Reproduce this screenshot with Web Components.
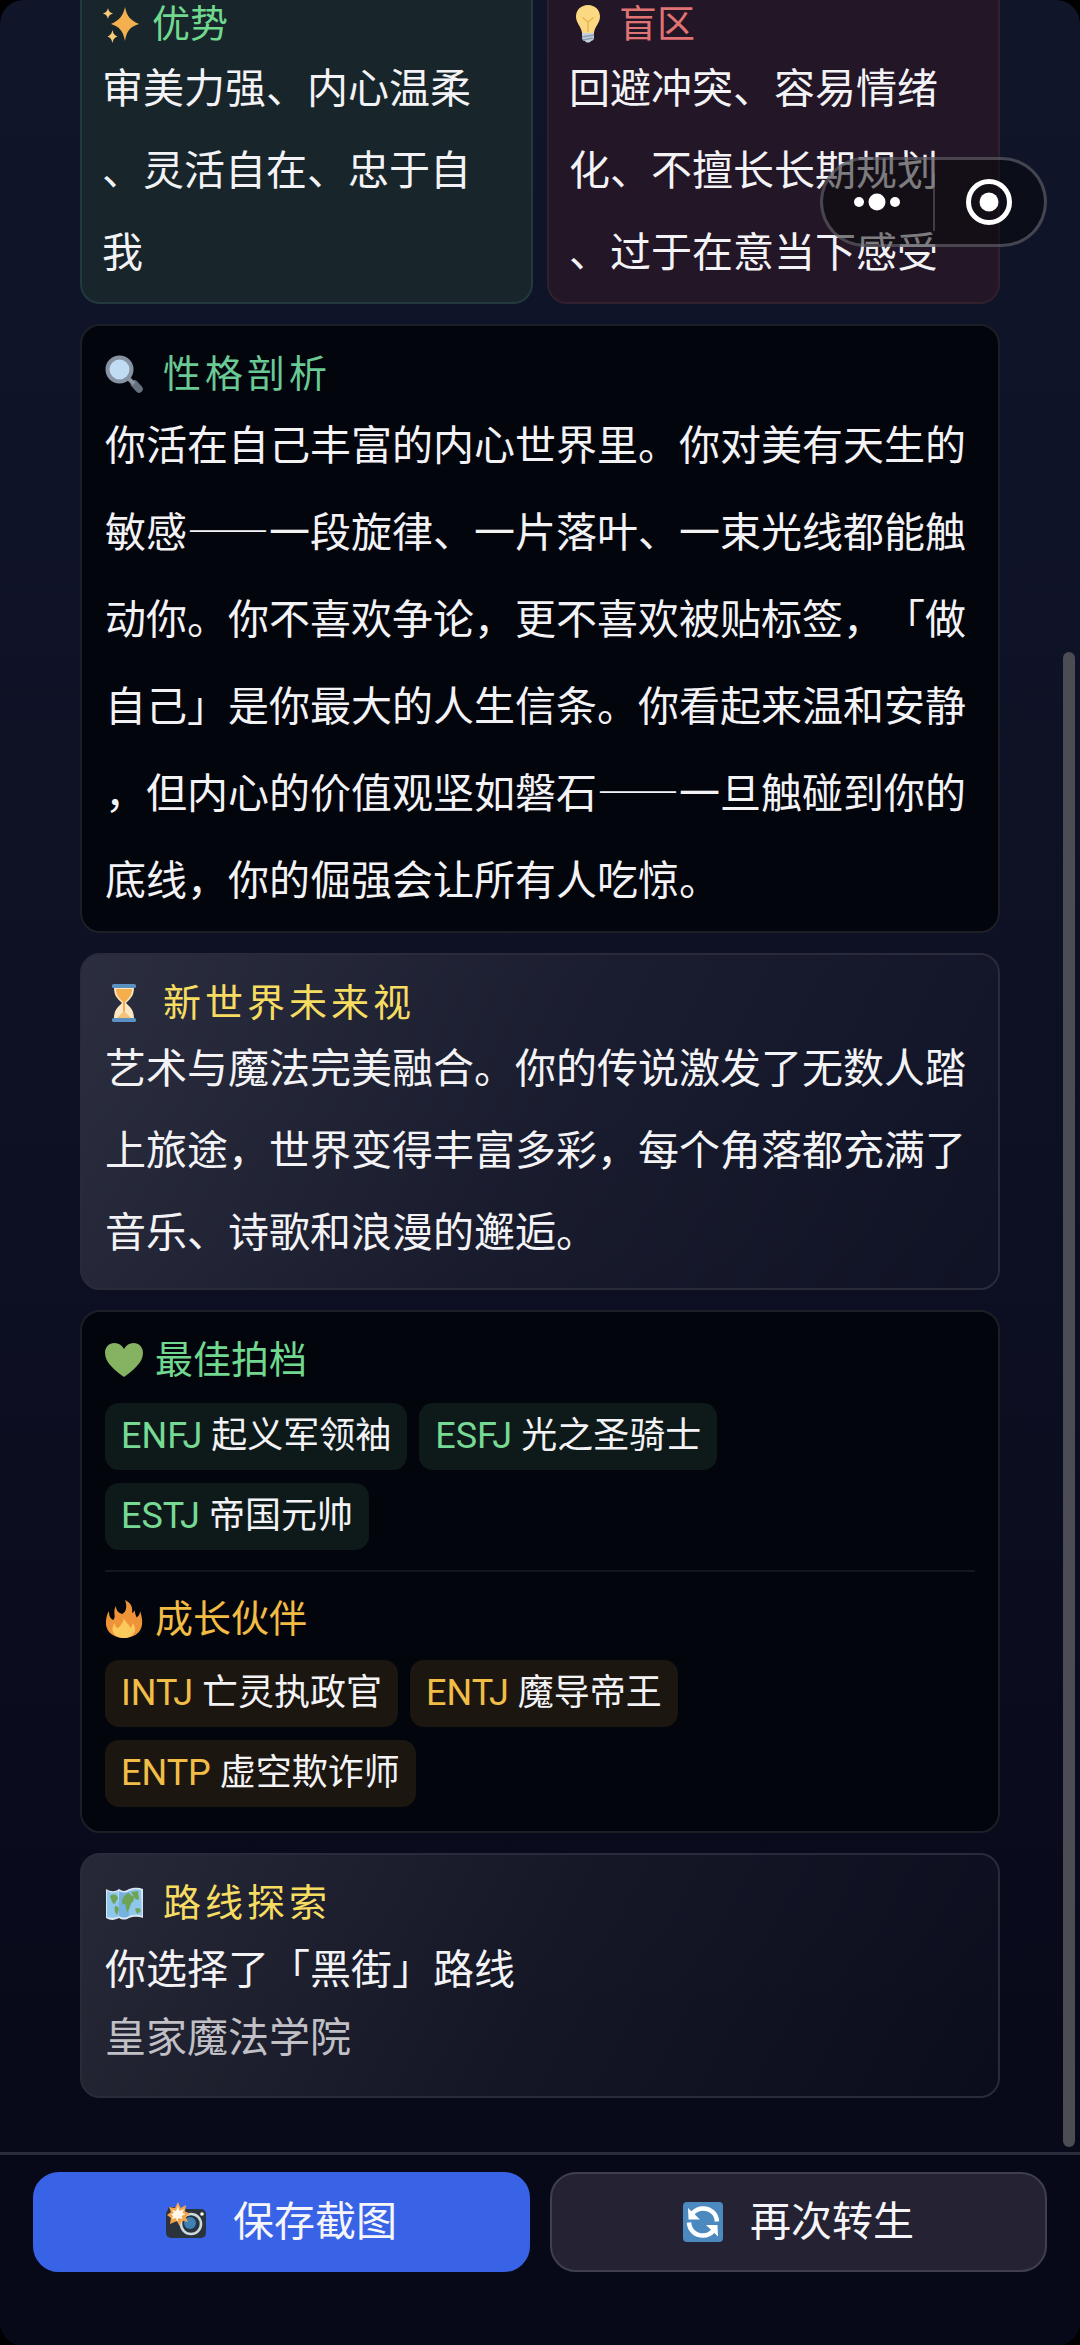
<!DOCTYPE html>
<html lang="zh-CN">
<head>
<meta charset="utf-8">
<meta name="viewport" content="width=device-width, initial-scale=1">
<title>转生结果</title>
<style>
  html { background: #000; }
  body {
    margin: 0;
    font-family: Roboto, "Noto Sans CJK SC", sans-serif;
    color: #f3f3f6;
    text-spacing-trim: space-all;
  }
</style>
</head>
<body>
<result-app>
  <card-row>
    <info-card tone="green" cut>
      <card-title slot="title" icon="sparkles" tone="mint" short>优势</card-title>
      <body-text>审美力强、内心温柔、灵活自在、忠于自我</body-text>
    </info-card>
    <info-card tone="red" cut>
      <card-title slot="title" icon="bulb" tone="coral" short>盲区</card-title>
      <body-text>回避冲突、容易情绪化、不擅长长期规划、过于在意当下感受</body-text>
    </info-card>
  </card-row>
  <info-card tone="dark">
    <card-title slot="title" icon="search" tone="jade" wide>性格剖析</card-title>
    <body-text spacing="loose">你活在自己丰富的内心世界里。你对美有天生的敏感——一段旋律、一片落叶、一束光线都能触动你。你不喜欢争论，更不喜欢被贴标签，「做自己」是你最大的人生信条。你看起来温和安静，但内心的价值观坚如磐石——一旦触碰到你的底线，你的倔强会让所有人吃惊。</body-text>
  </info-card>
  <info-card tone="glass">
    <card-title slot="title" icon="hourglass" tone="yellow" wide>新世界未来视</card-title>
    <body-text>艺术与魔法完美融合。你的传说激发了无数人踏上旅途，世界变得丰富多彩，每个角落都充满了音乐、诗歌和浪漫的邂逅。</body-text>
  </info-card>
  <info-card tone="dark" roomy>
    <partner-group>
      <card-title slot="title" icon="heart" tone="mint">最佳拍档</card-title>
      <type-chip code="ENFJ">起义军领袖</type-chip>
      <type-chip code="ESFJ">光之圣骑士</type-chip>
      <type-chip code="ESTJ">帝国元帅</type-chip>
    </partner-group>
    <partner-group tone="amber" divided>
      <card-title slot="title" icon="fire" tone="amber">成长伙伴</card-title>
      <type-chip code="INTJ" tone="amber">亡灵执政官</type-chip>
      <type-chip code="ENTJ" tone="amber">魔导帝王</type-chip>
      <type-chip code="ENTP" tone="amber">虚空欺诈师</type-chip>
    </partner-group>
  </info-card>
  <info-card tone="glass" roomy>
    <card-title slot="title" icon="map" tone="yellow" wide>路线探索</card-title>
    <body-text spacing="tight">你选择了「黑街」路线</body-text>
    <body-text spacing="tight" muted>皇家魔法学院</body-text>
  </info-card>
  <action-button slot="actions" icon="camera" primary>保存截图</action-button>
  <action-button slot="actions" icon="refresh">再次转生</action-button>
</result-app>

<script>
const ICONS = {
  sparkles: `<path fill="#f4b04f" d="M23 9c1.800 8.500 4.500 13 14 17-9.500 3-12.200 7-14 17-2-10-5-14-14-17 9-4 12-8.500 14-17Z" transform="translate(0 -7)"/><path fill="#f7cb78" d="M6 3c.8 3.500 2 4.500 5 5.500-3 1-4.200 2-5 5.500-1-3.500-2-4.500-5-5.500 3-1 4-2 5-5.500ZM10.500 25c.8 4 2 5 5 6.500-3 1.300-4.200 2.500-5 6.500-1-4-2-5.200-5-6.500 3-1.500 4-2.500 5-6.500Z"/>`,
  bulb: `<path fill="#c3cfdc" d="M13 27h12v6c0 2-2 3-3 3-1 2-5 2-6 0-1 0-3-1-3-3Z"/><path stroke="#8b9cb0" stroke-width="1.500" d="m13 32 12-2M14 35l10-2"/><path fill="#fbd982" d="M19 0c7 0 12 5 12 11.500 0 7-5.500 10-6 16.500H13C12.500 21.500 7 18.500 7 11.500 7 5 12 0 19 0Z"/><path fill="none" stroke="#e9b653" stroke-width="1.600" d="M13.500 12.500 19 17l5.500-4.500M19 17v10"/>`,
  search: `<path stroke="#66717d" stroke-width="7.500" stroke-linecap="round" d="m29.500 29 4.500 5"/><path stroke="#8a95a3" stroke-width="4" d="m22 22 7 7"/><circle cx="14.500" cy="14.500" r="12" fill="#bfdcf3" stroke="#8793a3" stroke-width="4"/>`,
  hourglass: `<path fill="#fde7c4" d="M9 3h20c0 9-3 11-8 16 5 5 8 7 8 16H9c0-9 3-11 8-16C12 14 9 12 9 3Z"/><path fill="#f6ad4b" d="M11 5h16c0 6-3 9-7 13v15h-2V18c-4-4-7-7-7-13Z"/><path fill="#f5c27a" d="m12 34 7-7 7 7Z"/><rect x="7" y="0" width="24" height="4" rx="1.500" fill="#5a90c2"/><rect x="7" y="34" width="24" height="4" rx="1.500" fill="#5a90c2"/>`,
  heart: `<path fill="#86b361" d="M19 36C11 30 0 22 0 12 0 6 4 2 9.500 2c4 0 7.500 2 9.500 6 2-4 5.500-6 9.500-6C34 2 38 6 38 12c0 10-11 18-19 24Z"/>`,
  fire: `<path fill="#ef9339" d="M20 0c6 3 8 7 7 13 2-.8 3-2 3-5 0-1 0 0 0 0-.5 6 1 7 1.500 9.500C34 16 35 14 35 11c2 5 2.500 10 2 14-1 8-9 13-18 13S2 33 1 25C.5 19 2 14 4 11c0 5 1 7 4 9 4-3-1-8 3-14 0 5 3 7 6 8C22 12 22 5 20 0Z"/><path fill="#fcc95d" d="M19 18c1 5 6 6 6 10 2-1 2.500-3 2.500-5 5 5 3 15-8.500 15S5 29 10 23c0 3 1 5 3 5 3-3 5-5 6-10Z"/>`,
  map: `<path fill="#dbe7f3" d="M1 5c5 3 9 3 13 0 4 3 7 2 10 0 4-1 9-2 14 0v29c-5-2-10-1-14 0-3 2-7 2-10 0-4 2-8 3-13 0Z"/><path fill="#8ec6ec" d="M2 7c5 2 8 2 11 0l2 25c-4 2-8 2-13 1Z"/><path fill="#76b2df" d="M14 7c4 2 7 2 10 0v25c-3 2-6 2-10 0Z"/><path fill="#8ec6ec" d="M24 7c4-2 8-2 12-1l1 26c-5-2-9-1-13 0Z"/><path fill="#6fa356" d="M5 12c4-3 8-1 8 3-2 1-2 4-4 5-2-1-3-5-4-8Zm5 10c4 0 5 3 2 9-2-2-3-5-2-9Zm7-4c0-4 3-8 7-9 2 1 2 3 4 3 3 3-1 6-2 8s-2 7-4 8c-1-3-1-7-2-8-2 1-3 0-3-2Zm9-10 7-1 1 8c-2 2-4 0-5-2Zm4 17c3-2 5-1 6 2l-4 3Z"/>`,
  camera: `<rect x="0" y="7" width="40" height="29" rx="5" fill="#2b343d"/><rect x="2" y="5" width="10" height="5" rx="2" fill="#2b343d"/><circle cx="25" cy="22" r="10" fill="#26343f" stroke="#ced8df" stroke-width="2.600"/><circle cx="24" cy="21" r="6" fill="#3f80b5"/><circle cx="36" cy="12" r="1.800" fill="#fff"/><path fill="#f3a54c" d="m12 0 2.500 6L20 3l-1 6.500 5 2-4.500 3L22 20l-6-1.500-2.500 5.500-2.500-5L4 22l1-6-4-3 4-3-2-5 6 1Z"/><path fill="#fff7e9" d="m12 4 1.500 5L18 7l-1.500 4 3 1-4 2 1 3-4-1-1.500 4-1-4-4 1 1-3-2-2 3-1-2-3 4 1Z"/>`,
  refresh: `<rect width="40" height="40" rx="4" fill="#4b89bf"/><path fill="none" stroke="#fff" stroke-width="4.500" d="M6 20.500C6.500 28 12 33.500 20 33.500c4.500 0 8-2 10.500-5M34 19.500C33.500 12 28 6.500 20 6.500c-4.500 0-8 2-10.500 5"/><path fill="#fff" d="m5 6 .5 11.500H17L5 6Zm30 28.500-.5-11.500H23l12 11.500Z"/>`
};
const icon = (name, size) =>
  `<svg viewBox="0 0 ${size} ${size}" width="${size}" height="${size}" aria-hidden="true">${ICONS[name] || ''}</svg>`;

const define = (tag, render) => customElements.define(tag, class extends HTMLElement {
  connectedCallback() {
    if (this.shadowRoot) return;
    this.attachShadow({ mode: 'open' }).innerHTML = render(this);
  }
});

define('card-row', () => `
  <style>
    :host { display: grid; grid-template-columns: 1fr 1fr; gap: 14px; }
  </style><slot></slot>`);

define('info-card', () => `
  <style>
    :host {
      display: block; box-sizing: border-box; border: 2px solid #1d1f26; border-radius: 20px;
      padding: 23px 23px 10px; background: #03050d;
    }
    :host([tone="glass"]) {
      border-color: #292b3b; padding-bottom: 14px;
      background: linear-gradient(115deg, rgba(255,255,255,.12), rgba(255,255,255,.05) 50%, rgba(255,255,255,.01));
    }
    :host([roomy]) { padding-bottom: 24px; }
    :host([cut]) {
      border-top: 0; border-radius: 0 0 20px 20px; padding: 0 20px 8px;
    }
    :host([tone="green"]) { background: #18262b; border-color: #223a3d; }
    :host([tone="red"]) { background: #231626; border-color: #33202e; }
  </style><slot name="title"></slot><slot></slot>`);

define('card-title', el => `
  <style>
    :host { display: block; }
    h2 {
      display: flex; align-items: center; gap: 12px; margin: 0;
      font-size: 38px; font-weight: 400; line-height: 50px; color: var(--tone);
    }
    :host { --tone: #71d88f; }
    :host([tone="coral"]) { --tone: #e07374; }
    :host([tone="jade"]) { --tone: #69ca96; }
    :host([tone="yellow"]) { --tone: #f6dd62; }
    :host([tone="amber"]) { --tone: #f2bb43; }
    :host([wide]) h2 { gap: 20px; letter-spacing: 4px; }
    :host([short]) h2 { line-height: 48px; }
    svg { flex: none; }
  </style><h2>${icon(el.getAttribute('icon'), 38)}<span><slot></slot></span></h2>`);

define('body-text', () => `
  <style>
    :host { display: block; }
    p { margin: 0; font-size: 41px; line-height: 82px; line-break: anywhere; }
    :host([spacing="loose"]) p { line-height: 87px; font-family: "Noto Sans CJK SC", sans-serif; }
    :host([spacing="tight"]) p { line-height: 68px; }
    :host([spacing="tight"]:not([muted])) p { margin-top: 8px; }
    :host([muted]) p { color: #c0c0c6; }
  </style><p><slot></slot></p>`);

define('partner-group', () => `
  <style>
    :host { display: block; }
    :host([divided]) { margin-top: 20px; padding-top: 22px; border-top: 2px solid #14151d; }
    .chips { display: flex; flex-wrap: wrap; gap: 13px 12px; margin-top: 18px; }
    :host([divided]) .chips { margin-top: 16px; }
  </style><slot name="title"></slot><div class="chips"><slot></slot></div>`);

define('type-chip', el => `
  <style>
    :host {
      display: block; padding: 0 16px; border-radius: 14px;
      font-size: 36px; line-height: 67px; white-space: nowrap; background: #0e1a1a;
    }
    b { font-weight: 400; color: #76d994; }
    :host([tone="amber"]) { background: #1c1611; }
    :host([tone="amber"]) b { color: #f1bd47; }
  </style><b>${el.getAttribute('code')}</b> <slot></slot>`);

define('action-button', el => `
  <style>
    :host { display: flex; flex: 1; }
    button {
      flex: 1; display: flex; align-items: center; justify-content: center; gap: 27px;
      height: 100px; padding: 0; border: 2px solid #3f3f4e; border-radius: 26px;
      background: #252333; color: #f6f6fa; font: inherit; font-size: 41px; line-height: 60px; cursor: pointer;
    }
    :host([primary]) button { background: #3963e6; border-color: #3963e6; }
  </style><button type="button">${icon(el.getAttribute('icon'), 40)}<span><slot></slot></span></button>`);

define('capsule-menu', () => `
  <style>
    :host {
      position: absolute; top: 157px; right: 33px; width: 227px; height: 90px; box-sizing: border-box;
      display: flex; align-items: center; border: 3px solid rgba(125,125,135,.5); border-radius: 45px;
      background: rgba(6,6,8,.5);
    }
    button { flex: 1; height: 58px; padding: 0; border: 0; background: none; display: flex; align-items: center; justify-content: center; }
    button + button { border-left: 2px solid rgba(150,150,160,.35); }
  </style>
  <button type="button" aria-label="更多"><svg width="48" height="20" viewBox="0 0 48 20" fill="#fff"><circle cx="5" cy="10" r="5"/><circle cx="23" cy="10" r="8.500"/><circle cx="41" cy="10" r="5"/></svg></button>
  <button type="button" aria-label="关闭"><svg width="48" height="48" viewBox="0 0 48 48"><circle cx="24" cy="24" r="20.500" fill="none" stroke="#fff" stroke-width="5"/><circle cx="24" cy="24" r="9.500" fill="#fff"/></svg></button>`);

define('scroll-thumb', () => `
  <style>
    :host { position: absolute; right: 5px; top: 652px; bottom: 5px; width: 12px; border-radius: 6px; background: #4b4c54; }
  </style>`);

define('result-app', () => `
  <style>
    :host {
      display: flex; flex-direction: column; min-height: 100vh; overflow: hidden; border-radius: 24px;
      background: linear-gradient(#10152a, #0e1124 45%, #080a1a 88%, #070918);
    }
    main { position: relative; flex: 1; display: flex; flex-direction: column; gap: 20px; padding: 0 80px 54px; }
    footer { display: flex; gap: 20px; padding: 17px 33px 74px; border-top: 3px solid #2a2c3a; background: #070918; }
  </style>
  <main><slot></slot><capsule-menu></capsule-menu><scroll-thumb></scroll-thumb></main>
  <footer><slot name="actions"></slot></footer>`);
</script>
</body>
</html>
